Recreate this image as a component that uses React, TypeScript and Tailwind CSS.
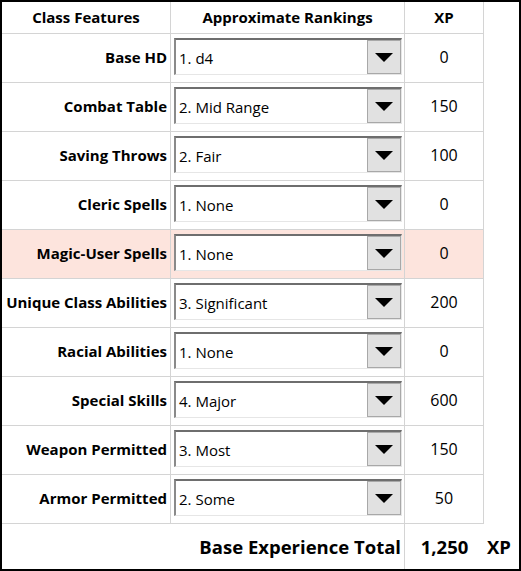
import React from "react"

interface Row {
  label: string
  choice: string
  xp: string
  highlight?: boolean
}

const rows: Row[] = [
  { label: "Base HD", choice: "1. d4", xp: "0" },
  { label: "Combat Table", choice: "2. Mid Range", xp: "150" },
  { label: "Saving Throws", choice: "2. Fair", xp: "100" },
  { label: "Cleric Spells", choice: "1. None", xp: "0" },
  { label: "Magic-User Spells", choice: "1. None", xp: "0", highlight: true },
  { label: "Unique Class Abilities", choice: "3. Significant", xp: "200" },
  { label: "Racial Abilities", choice: "1. None", xp: "0" },
  { label: "Special Skills", choice: "4. Major", xp: "600" },
  { label: "Weapon Permitted", choice: "3. Most", xp: "150" },
  { label: "Armor Permitted", choice: "2. Some", xp: "50" },
]

function Dropdown({ value }: { value: string }) {
  return (
    <div className="ml-[3px] mt-[4px] flex h-[37px] w-[228px] items-stretch border-t-2 border-l-2 border-b border-r border-t-[#6e6e6e] border-l-[#8a8a8a] border-b-[#e6e6e6] border-r-[#e6e6e6] bg-white">
      <div className="flex flex-1 items-center pl-[3px] pt-[2px] text-[15px] leading-none text-black">{value}</div>
      <div className="flex w-[34px] items-center justify-center border border-[#a8a8a8] bg-[#e1e1e1]">
        <svg width="18" height="9" viewBox="0 0 18 9">
          <polygon points="0,0 18,0 9,9" fill="#000" />
        </svg>
      </div>
    </div>
  )
}

export default function App() {
  return (
    <div
      className="h-[571px] w-[521px] border-2 border-black bg-white text-black"
      style={{ fontFamily: '"Open Sans", "Noto Sans", sans-serif' }}
    >
      {/* Header */}
      <div className="grid h-[32px] grid-cols-[169px_234px_79px_35px] text-[15px] font-bold">
        <div className="flex items-center justify-center border-r border-b border-[#d4d4d4]">Class Features</div>
        <div className="flex items-center justify-center border-r border-b border-[#d4d4d4]">Approximate Rankings</div>
        <div className="flex items-center justify-center border-r border-b border-[#d4d4d4]">XP</div>
        <div />
      </div>

      {rows.map((r) => (
        <div key={r.label} className="grid h-[49px] grid-cols-[169px_234px_79px_35px]">
          <div
            className={`flex items-center justify-end whitespace-nowrap border-r border-b border-[#d4d4d4] pr-[3px] pb-[2px] text-[15px] font-bold ${
              r.highlight ? "bg-[#fde4dd]" : ""
            }`}
          >
            {r.label}
          </div>
          <div className={`border-r border-b border-[#d4d4d4] ${r.highlight ? "bg-[#fde4dd]" : ""}`}>
            <Dropdown value={r.choice} />
          </div>
          <div
            className={`flex items-center justify-center border-r border-b border-[#d4d4d4] pb-[2px] text-[16px] ${
              r.highlight ? "bg-[#fde4dd]" : ""
            }`}
          >
            {r.xp}
          </div>
          <div />
        </div>
      ))}

      {/* Footer */}
      <div className="grid h-[45px] grid-cols-[403px_79px_35px] text-[18.5px] font-bold">
        <div className="flex items-center justify-end border-r border-[#d4d4d4] pr-[3px]">Base Experience Total</div>
        <div className="flex items-center justify-center">1,250</div>
        <div className="flex items-center pl-[3px]">XP</div>
      </div>
    </div>
  )
}
